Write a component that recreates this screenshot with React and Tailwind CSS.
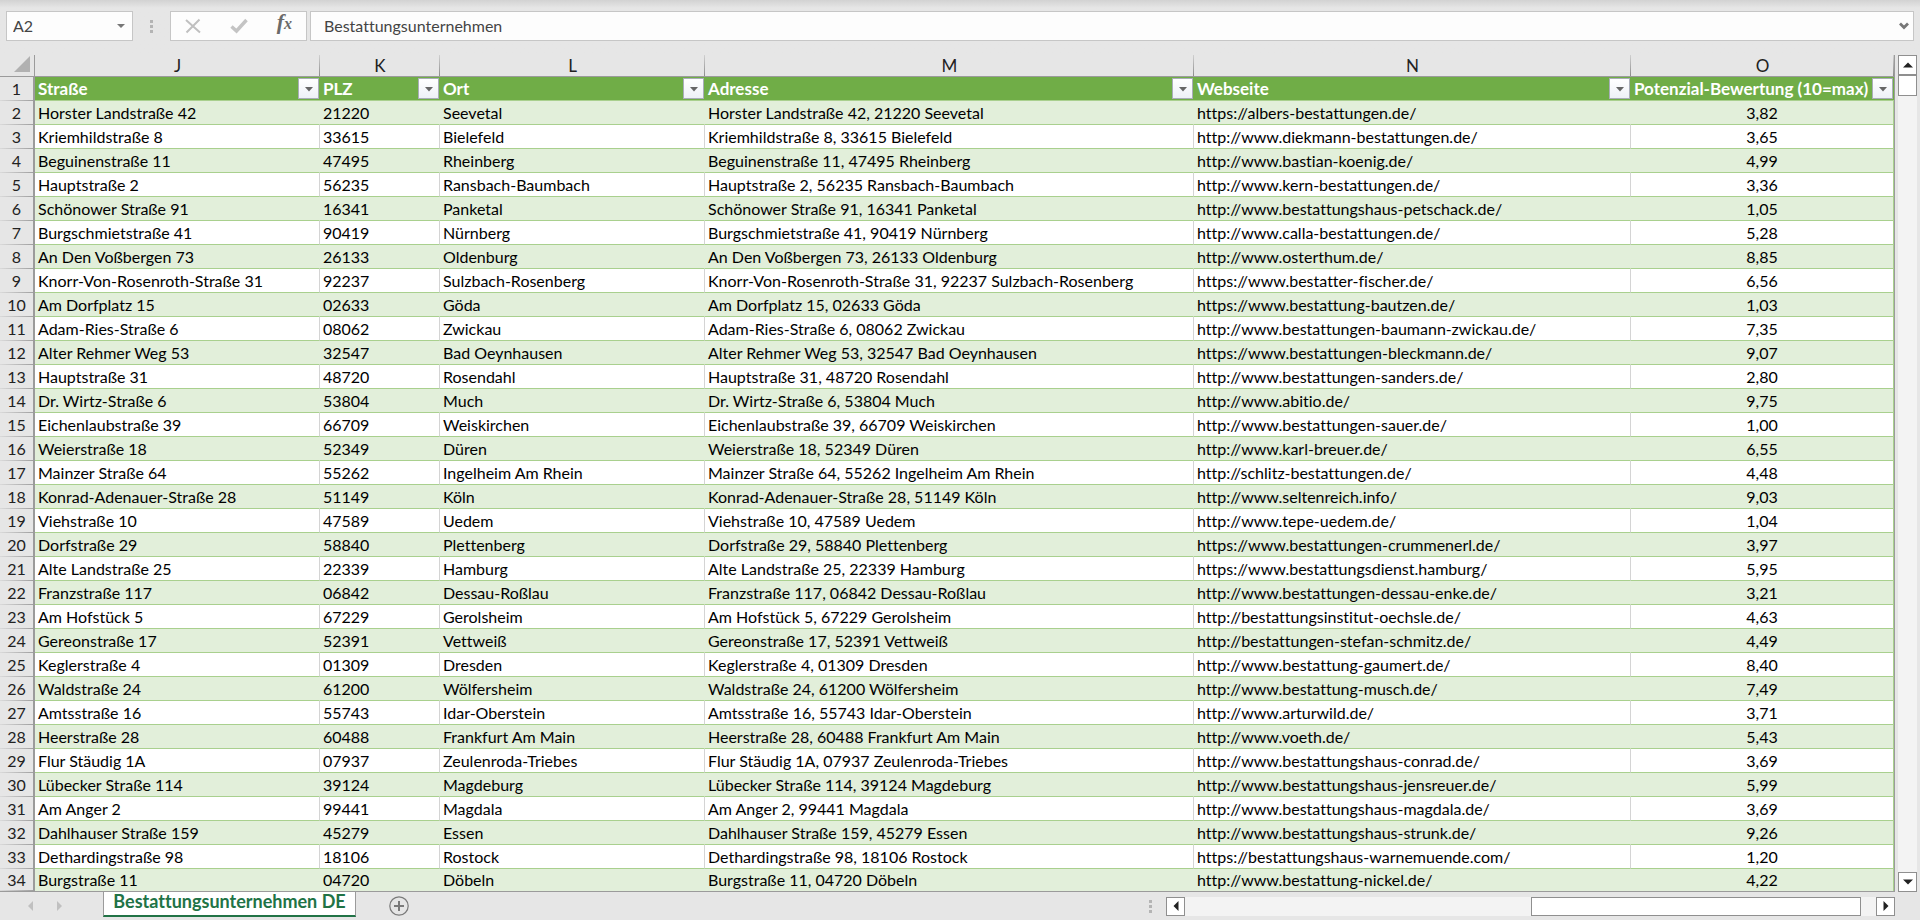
import React from "react";
import clsx from "clsx";

const columns = [
  { letter: "J", title: "Straße", width: "w-[285px]" },
  { letter: "K", title: "PLZ", width: "w-[120px]" },
  { letter: "L", title: "Ort", width: "w-[265px]" },
  { letter: "M", title: "Adresse", width: "" },
  { letter: "N", title: "Webseite", width: "w-[437px]" },
  { letter: "O", title: "Potenzial-Bewertung (10=max)", width: "w-[263px]" },
];

const rows = [
  ["Horster Landstraße 42", "21220", "Seevetal", "https://albers-bestattungen.de/", "3,82"],
  ["Kriemhildstraße 8", "33615", "Bielefeld", "http://www.diekmann-bestattungen.de/", "3,65"],
  ["Beguinenstraße 11", "47495", "Rheinberg", "http://www.bastian-koenig.de/", "4,99"],
  ["Hauptstraße 2", "56235", "Ransbach-Baumbach", "http://www.kern-bestattungen.de/", "3,36"],
  ["Schönower Straße 91", "16341", "Panketal", "http://www.bestattungshaus-petschack.de/", "1,05"],
  ["Burgschmietstraße 41", "90419", "Nürnberg", "http://www.calla-bestattungen.de/", "5,28"],
  ["An Den Voßbergen 73", "26133", "Oldenburg", "http://www.osterthum.de/", "8,85"],
  ["Knorr-Von-Rosenroth-Straße 31", "92237", "Sulzbach-Rosenberg", "https://www.bestatter-fischer.de/", "6,56"],
  ["Am Dorfplatz 15", "02633", "Göda", "https://www.bestattung-bautzen.de/", "1,03"],
  ["Adam-Ries-Straße 6", "08062", "Zwickau", "http://www.bestattungen-baumann-zwickau.de/", "7,35"],
  ["Alter Rehmer Weg 53", "32547", "Bad Oeynhausen", "https://www.bestattungen-bleckmann.de/", "9,07"],
  ["Hauptstraße 31", "48720", "Rosendahl", "http://www.bestattungen-sanders.de/", "2,80"],
  ["Dr. Wirtz-Straße 6", "53804", "Much", "http://www.abitio.de/", "9,75"],
  ["Eichenlaubstraße 39", "66709", "Weiskirchen", "http://www.bestattungen-sauer.de/", "1,00"],
  ["Weierstraße 18", "52349", "Düren", "http://www.karl-breuer.de/", "6,55"],
  ["Mainzer Straße 64", "55262", "Ingelheim Am Rhein", "http://schlitz-bestattungen.de/", "4,48"],
  ["Konrad-Adenauer-Straße 28", "51149", "Köln", "http://www.seltenreich.info/", "9,03"],
  ["Viehstraße 10", "47589", "Uedem", "http://www.tepe-uedem.de/", "1,04"],
  ["Dorfstraße 29", "58840", "Plettenberg", "https://www.bestattungen-crummenerl.de/", "3,97"],
  ["Alte Landstraße 25", "22339", "Hamburg", "https://www.bestattungsdienst.hamburg/", "5,95"],
  ["Franzstraße 117", "06842", "Dessau-Roßlau", "http://www.bestattungen-dessau-enke.de/", "3,21"],
  ["Am Hofstück 5", "67229", "Gerolsheim", "http://bestattungsinstitut-oechsle.de/", "4,63"],
  ["Gereonstraße 17", "52391", "Vettweiß", "http://bestattungen-stefan-schmitz.de/", "4,49"],
  ["Keglerstraße 4", "01309", "Dresden", "http://www.bestattung-gaumert.de/", "8,40"],
  ["Waldstraße 24", "61200", "Wölfersheim", "http://www.bestattung-musch.de/", "7,49"],
  ["Amtsstraße 16", "55743", "Idar-Oberstein", "http://www.arturwild.de/", "3,71"],
  ["Heerstraße 28", "60488", "Frankfurt Am Main", "http://www.voeth.de/", "5,43"],
  ["Flur Stäudig 1A", "07937", "Zeulenroda-Triebes", "http://www.bestattungshaus-conrad.de/", "3,69"],
  ["Lübecker Straße 114", "39124", "Magdeburg", "http://www.bestattungshaus-jensreuer.de/", "5,99"],
  ["Am Anger 2", "99441", "Magdala", "http://www.bestattungshaus-magdala.de/", "3,69"],
  ["Dahlhauser Straße 159", "45279", "Essen", "http://www.bestattungshaus-strunk.de/", "9,26"],
  ["Dethardingstraße 98", "18106", "Rostock", "https://bestattungshaus-warnemuende.com/", "1,20"],
  ["Burgstraße 11", "04720", "Döbeln", "http://www.bestattung-nickel.de/", "4,22"],
];

const Triangle = ({ points, className }) => (
  <svg viewBox="0 0 10 10" className={className} fill="currentColor">
    <polygon points={points} />
  </svg>
);

const Dots = () => (
  <span className="flex flex-col gap-0.5">
    <i className="h-[3px] w-[3px] bg-[#b4b4b4]" />
    <i className="h-[3px] w-[3px] bg-[#b4b4b4]" />
    <i className="h-[3px] w-[3px] bg-[#b4b4b4]" />
  </span>
);

const FormulaBar = () => (
  <div className="flex h-[55px] items-start bg-linear-to-b from-[#d2d2d2] to-[#e6e6e6] to-[8px] pt-[11px] pr-1.5 pl-1.5 text-[#444]">
    <div className="flex h-[30px] w-[127px] items-center border border-[#c6c6c6] bg-[#fdfdfd] pr-1.5 pl-1.5">
      <input
        aria-label="Name box"
        defaultValue="A2"
        className="w-full min-w-0 outline-none"
      />
      <button aria-label="Open name box" className="text-[#777]">
        <Triangle points="1,3 9,3 5,7" className="h-2.5 w-2.5" />
      </button>
    </div>
    <div className="flex h-[30px] w-[37px] items-center justify-center">
      <Dots />
    </div>
    <div className="mr-[3px] flex h-[30px] w-[137px] items-center justify-between border border-[#c6c6c6] bg-[#fdfdfd] px-3.5">
      <button aria-label="Cancel">
        <svg viewBox="0 0 16 16" className="h-4 w-4" fill="none" stroke="#c0c0c0" strokeWidth="2">
          <path d="M1 2 L15 14.5 M14.5 1.5 L1.5 14.5" />
        </svg>
      </button>
      <button aria-label="Enter">
        <svg viewBox="0 0 18 16" className="h-4 w-[18px]" fill="none" stroke="#c4c4c4" strokeWidth="3.4">
          <path d="M1.5 8.5 L6.5 13 L16.5 2" />
        </svg>
      </button>
      <button
        aria-label="Insert function"
        className="pb-1 font-['Liberation_Serif',serif] text-[22px] leading-5 font-bold text-[#6a6a6a] italic"
      >
        f<span className="text-base">x</span>
      </button>
    </div>
    <div className="flex h-[30px] flex-1 items-center border border-[#c6c6c6] bg-[#fdfdfd] pr-1 pl-[13px]">
      <input
        aria-label="Formula bar"
        defaultValue="Bestattungsunternehmen"
        className="min-w-0 flex-1 outline-none"
      />
      <button aria-label="Expand formula bar">
        <svg viewBox="0 0 10 8" className="h-2 w-2.5" fill="none" stroke="#777" strokeWidth="2.8">
          <path d="M1 1.5 L5 5.5 L9 1.5" />
        </svg>
      </button>
    </div>
  </div>
);

const RowNumber = ({ n }) => (
  <th
    scope="row"
    className="border-r-2 border-[#9b9b9b] bg-[#e6e6e6] bg-[linear-gradient(to_right,#dadada,#a0a0a0)] bg-[length:100%_1px] bg-bottom bg-no-repeat p-0 font-normal text-[#222]"
  >
    {n}
  </th>
);

const Sheet = () => (
  <table className="w-full table-fixed border-separate border-spacing-0 border-r border-[#9b9b9b] leading-[22px] whitespace-nowrap">
    <colgroup>
      <col className="w-[35px]" />
      {columns.map((c) => (
        <col key={c.letter} className={c.width} />
      ))}
    </colgroup>
    <thead>
      <tr className="h-[22px] bg-[#e6e6e6] text-[17px] leading-[21px]">
        <th className="border-r border-b border-[#9b9b9b] p-0 pr-1 pb-1">
          <button aria-label="Select all" className="ml-auto block text-[#b1b1b1]">
            <Triangle points="10,0 10,10 0,10" className="h-4 w-4" />
          </button>
        </th>
        {columns.map((c) => (
          <th
            key={c.letter}
            scope="col"
            className="border-b border-[#9b9b9b] bg-[linear-gradient(#d0d0d0,#8c8c8c)] bg-[length:1px_100%] bg-right bg-no-repeat p-0 font-normal text-[#222]"
          >
            {c.letter}
          </th>
        ))}
      </tr>
    </thead>
    <tbody>
      <tr className="h-6">
        <RowNumber n={1} />
        {columns.map((c) => (
          <th
            key={c.letter}
            scope="col"
            className="border-b border-[#a9d08e] bg-[#70ad47] p-0 pl-[3px] text-left text-[17px] font-bold text-white"
          >
            <div className="flex items-center justify-between">
              {c.title}
              <button
                aria-label={`Filter ${c.title}`}
                className="mr-px flex h-[21px] w-[21px] items-center justify-center border border-[#a9adb8] bg-linear-to-b from-white to-[#eef1f7] text-[#666]"
              >
                <Triangle points="1,3 9,3 5,7.5" className="h-2.5 w-2.5" />
              </button>
            </div>
          </th>
        ))}
      </tr>
      {rows.map(([street, zip, city, site, score], i) => (
        <tr
          key={i}
          className={clsx(
            "h-6 last:h-[22px] last:*:border-b-0",
            i % 2 ? "bg-white" : "bg-[#e2efda]",
          )}
        >
          <RowNumber n={i + 2} />
          {[street, zip, city, `${street}, ${zip} ${city}`, site].map((text, j) => (
            <td
              key={j}
              className={clsx(
                "border-r border-b border-b-[#a9d08e] p-0 pl-[3px]",
                i % 2 ? "border-r-[#d4d4d4]" : "border-r-transparent",
              )}
            >
              {text}
            </td>
          ))}
          <td className="border-r border-b border-[#a9d08e] p-0 text-center">{score}</td>
        </tr>
      ))}
    </tbody>
  </table>
);

const VerticalScroll = () => (
  <div className="mr-[3px] ml-[3px] flex w-[19px] flex-col bg-[#f3f3f3] text-[#222]">
    <button
      aria-label="Scroll up"
      className="flex h-5 items-center justify-center border border-[#8f8f8f] bg-white"
    >
      <Triangle points="0,7.5 10,7.5 5,2.5" className="h-2.5 w-2.5" />
    </button>
    <div className="h-[21px] border border-[#8f8f8f] bg-white" />
    <button
      aria-label="Scroll down"
      className="mt-auto flex h-5 items-center justify-center border border-[#8f8f8f] bg-white"
    >
      <Triangle points="0,2.5 10,2.5 5,7.5" className="h-2.5 w-2.5" />
    </button>
  </div>
);

const BottomBar = () => (
  <div className="flex h-7 pr-[25px]">
    <div className="flex w-[103px] items-center gap-5 pl-[26px] text-[#c0c0c0]">
      <button aria-label="Previous sheet">
        <Triangle points="7,0 7,10 2,5" className="h-2.5 w-2.5" />
      </button>
      <button aria-label="Next sheet">
        <Triangle points="1,0 1,10 6,5" className="h-2.5 w-2.5" />
      </button>
    </div>
    <button className="h-[25px] w-[253px] border-x border-b-2 border-x-[#9b9b9b] border-b-[#217346] bg-white pb-1 text-lg leading-[19px] font-bold text-[#217346]">
      Bestattungsunternehmen DE
    </button>
    <button aria-label="New sheet" className="ml-[33px] self-center">
      <svg viewBox="0 0 20 20" className="h-5 w-5" fill="none" stroke="#7a7a7a">
        <circle cx="10" cy="10" r="9.2" strokeWidth="1.2" />
        <path d="M10 5v10M5 10h10" strokeWidth="2" />
      </svg>
    </button>
    <div className="ml-auto flex w-[746px] items-center gap-3.5">
      <Dots />
      <div className="flex h-[19px] flex-1 bg-[#f3f3f3] text-[#222]">
        <button
          aria-label="Scroll left"
          className="flex w-[19px] items-center justify-center border border-[#8f8f8f] bg-white"
        >
          <Triangle points="7.5,0 7.5,10 2.5,5" className="h-2.5 w-2.5" />
        </button>
        <div className="mr-[15px] ml-auto w-[330px] border border-[#8f8f8f] bg-white" />
        <button
          aria-label="Scroll right"
          className="flex w-[19px] items-center justify-center border border-[#8f8f8f] bg-white"
        >
          <Triangle points="2.5,0 2.5,10 7.5,5" className="h-2.5 w-2.5" />
        </button>
      </div>
    </div>
  </div>
);

export default function App() {
  return (
    <div className="bg-[#e6e6e6] font-[Lato,Carlito,sans-serif] text-base text-black [font-variant-ligatures:none]">
      <FormulaBar />
      <div className="flex">
        <div className="min-w-0 flex-1 border-b border-[#9b9b9b]">
          <Sheet />
        </div>
        <VerticalScroll />
      </div>
      <BottomBar />
    </div>
  );
}
